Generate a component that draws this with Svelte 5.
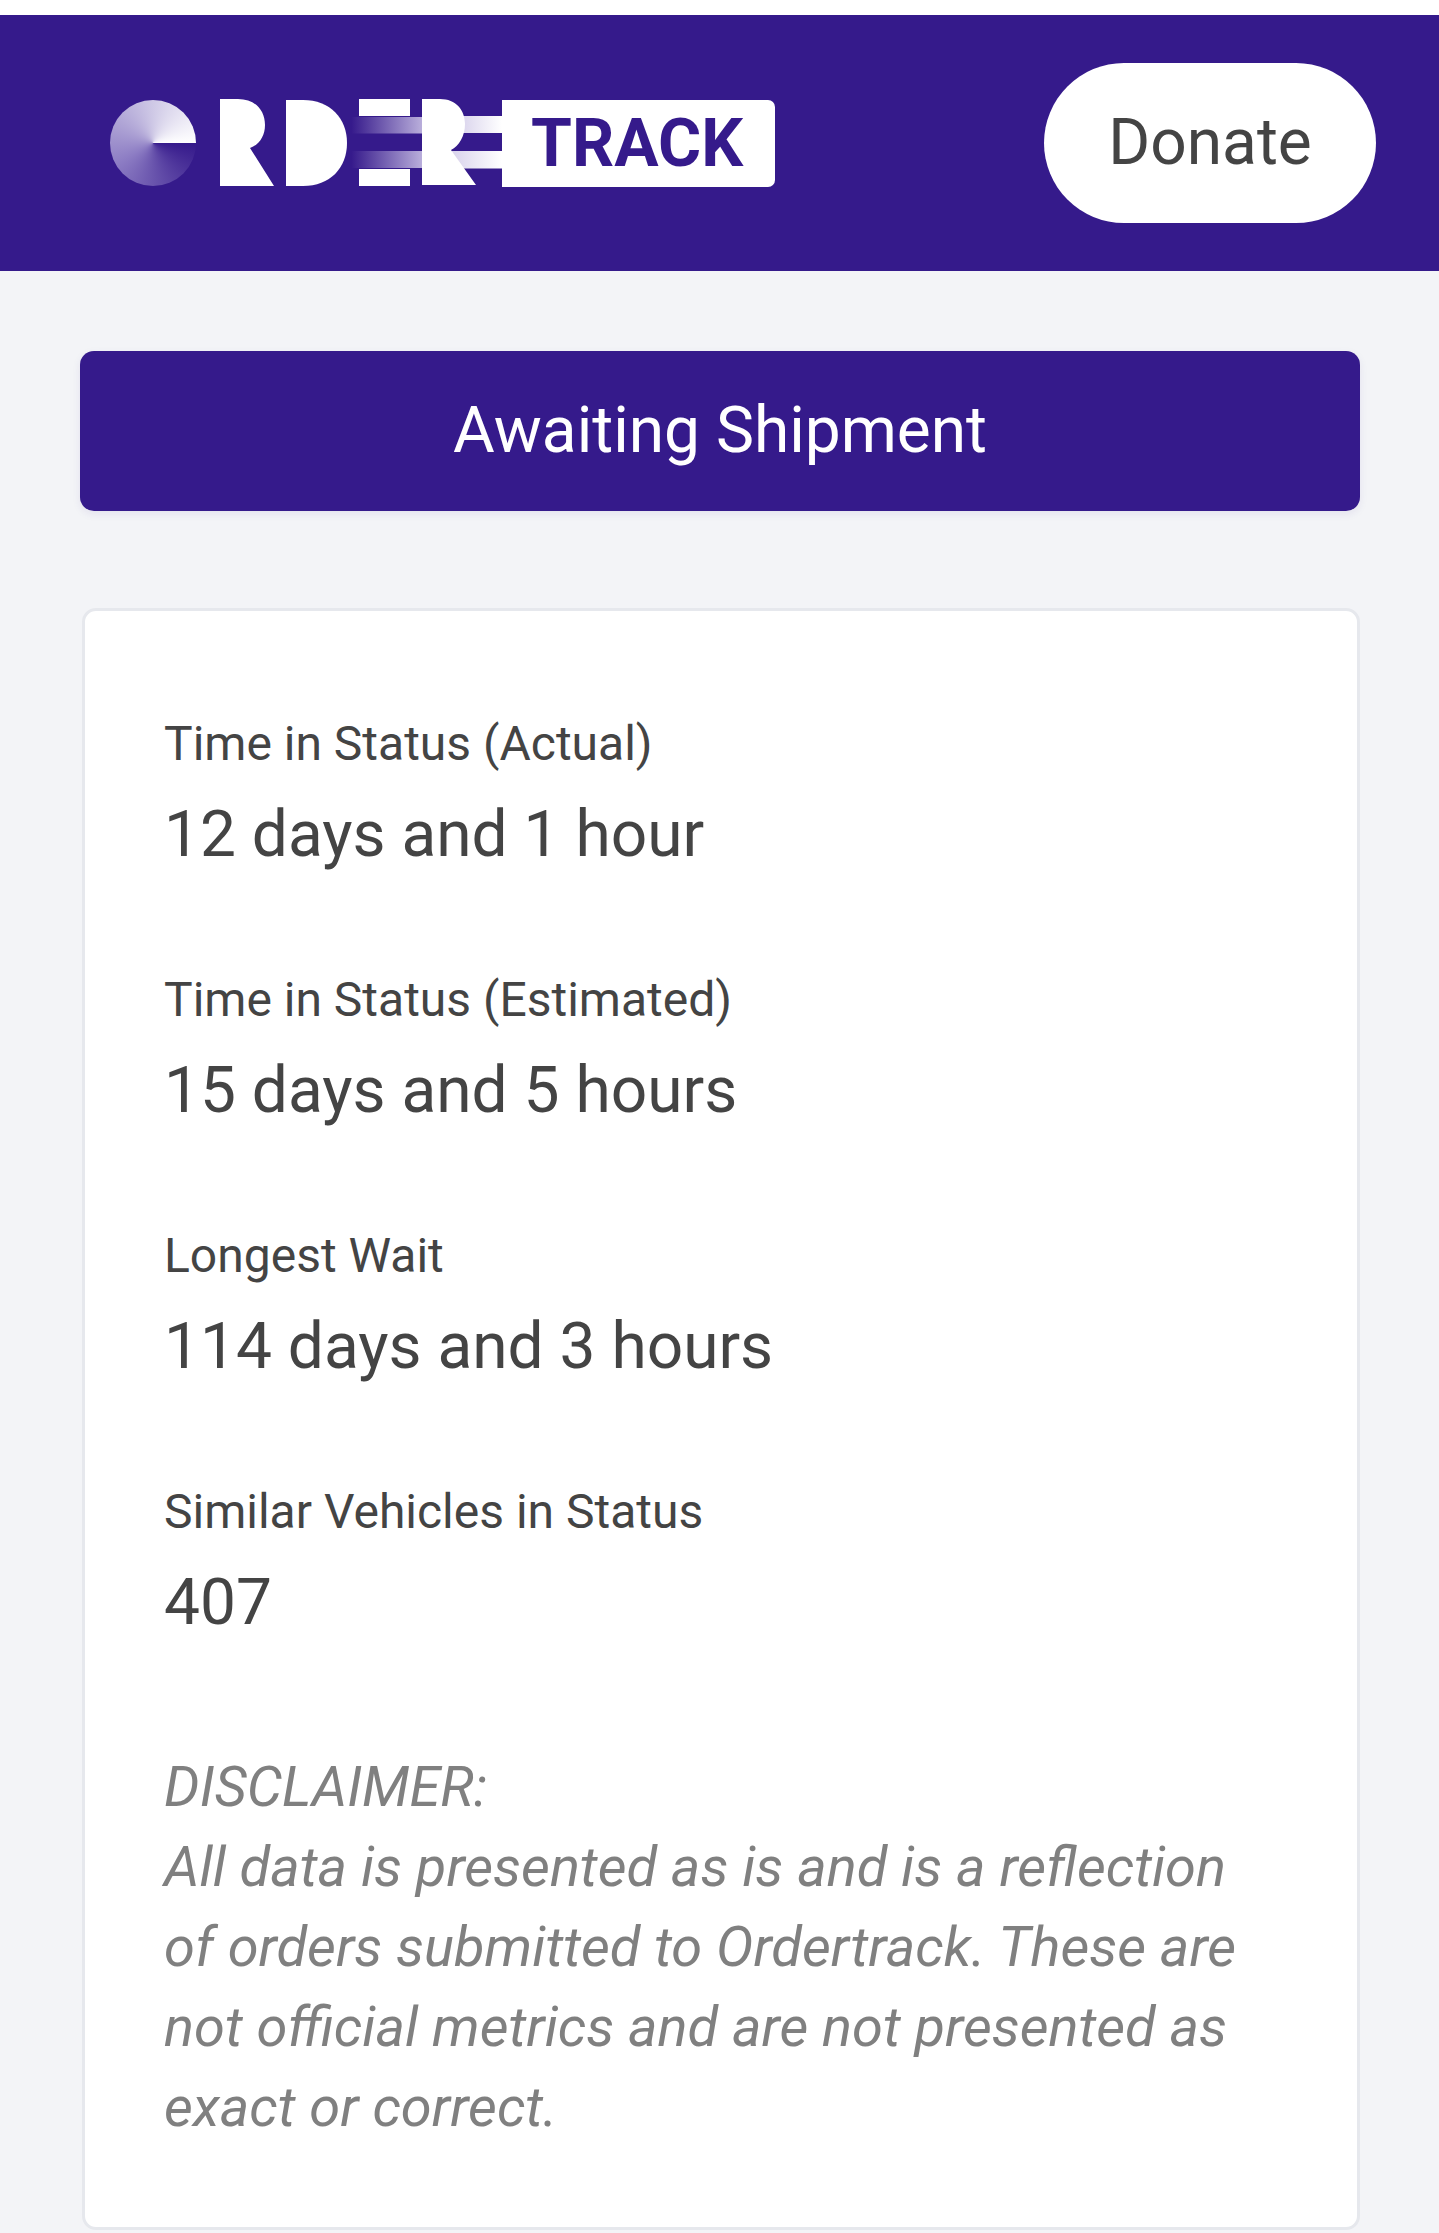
<script lang="ts">
  const stats = [
    { label: "Time in Status (Actual)", value: "12 days and 1 hour" },
    { label: "Time in Status (Estimated)", value: "15 days and 5 hours" },
    { label: "Longest Wait", value: "114 days and 3 hours" },
    { label: "Similar Vehicles in Status", value: "407" },
  ];
</script>

<div class="page">
  <header class="top">
    <div class="logo">
      <span class="disc" aria-hidden="true"></span>
      <svg class="letters" viewBox="196 96 306 94" width="306" height="94" aria-label="Order">
        <defs>
          <linearGradient id="band-e" x1="0" x2="1" y1="0" y2="0">
            <stop offset="0" stop-color="#35198b" />
            <stop offset="1" stop-color="#b9aedb" />
          </linearGradient>
          <linearGradient id="band-r" x1="0" x2="1" y1="0" y2="0">
            <stop offset="0" stop-color="#d9d3ec" />
            <stop offset="1" stop-color="#ffffff" />
          </linearGradient>
        </defs>
        <path fill="#fff" d="M220 99H238C255 99 265 110 265 125C265 136 259 145 250 148L274 186H220Z" />
        <path fill="#fff" d="M286 100H303C330 100 347 118 347 143C347 168 330 186 303 186H286Z" />
        <rect x="359" y="99" width="51" height="17" fill="#fff" />
        <rect x="359" y="169" width="51" height="17" fill="#fff" />
        <rect x="351" y="117" width="71" height="16.5" fill="url(#band-e)" />
        <rect x="351" y="151" width="71" height="17" fill="url(#band-e)" />
        <rect x="460" y="116" width="42" height="17" fill="url(#band-r)" />
        <rect x="452" y="151" width="50" height="17.5" fill="url(#band-r)" />
        <path fill="#fff" d="M422 99H440C456 99 465 110 465 124C465 136 459 146 451 150L476 185H422Z" />
      </svg>
      <span class="track">TRACK</span>
    </div>
    <button class="donate">Donate</button>
  </header>

  <main class="content">
    <div class="status">Awaiting Shipment</div>

    <section class="card">
      {#each stats as stat}
        <div class="stat">
          <div class="label">{stat.label}</div>
          <div class="value">{stat.value}</div>
        </div>
      {/each}
      <p class="disclaimer">
        DISCLAIMER:<br />
        All data is presented as is and is a reflection<br />
        of orders submitted to Ordertrack. These are<br />
        not official metrics and are not presented as<br />
        exact or correct.
      </p>
    </section>
  </main>
</div>

<style>
  :global(body) {
    background: #f3f4f7;
  }
  .page {
    font-family: Roboto, "Liberation Sans", sans-serif;
    color: #444;
    height: 2233px;
    overflow: hidden;
    background: #f3f4f7;
    border-top: 15px solid #fff;
    box-sizing: border-box;
  }
  .top {
    height: 256px;
    background: #351a8b;
    display: flex;
    align-items: center;
    justify-content: space-between;
    padding: 0 63px 0 110px;
  }
  .logo {
    display: flex;
    align-items: center;
    height: 94px;
  }
  .disc {
    width: 86px;
    height: 86px;
    border-radius: 50%;
    flex: none;
    background: conic-gradient(from 90deg, #35198b 0deg, #8d7dc4 150deg, #cfc9e6 270deg, #ffffff 360deg);
  }
  .letters {
    display: block;
    flex: none;
  }
  .track {
    width: 273px;
    height: 87px;
    box-sizing: border-box;
    padding-left: 29px;
    background: #fff;
    border-radius: 0 7px 7px 0;
    color: #351a8b;
    font-size: 66px;
    font-weight: 700;
    line-height: 87px;
  }
  .donate {
    width: 332px;
    height: 160px;
    border: 0;
    border-radius: 80px;
    background: #fff;
    color: #444;
    font-family: inherit;
    font-size: 64px;
    padding: 0 0 2px;
  }
  .content {
    padding: 80px 79px 0 80px;
  }
  .status {
    height: 160px;
    border-radius: 14px;
    background: #351a8b;
    color: #fff;
    font-size: 64px;
    line-height: 160px;
    text-align: center;
    box-shadow: 0 3px 8px rgba(53, 26, 139, 0.08);
  }
  .card {
    margin: 97px 0 0 2px;
    height: 1622px;
    box-sizing: border-box;
    padding: 101px 79px 0;
    background: #fff;
    border: 3px solid #e6e8ed;
    border-radius: 14px;
  }
  .stat {
    height: 256px;
  }
  .label {
    font-size: 48px;
    line-height: 64px;
  }
  .value {
    font-size: 64px;
    line-height: 90px;
    margin-top: 14px;
  }
  .disclaimer {
    margin: 0;
    padding-top: 11px;
    font-size: 56px;
    line-height: 80px;
    font-style: italic;
    color: #808080;
  }
</style>
